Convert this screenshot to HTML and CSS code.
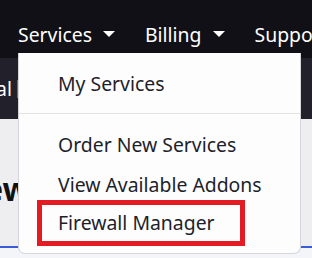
FILE: index.html
```html
<!DOCTYPE html>
<html>
<head>
<meta charset="utf-8">
<link rel="stylesheet" href="styles.css">
</head>
<body>
<div class="page">
  <nav class="topnav">
    <div class="nav-item">Services <span class="caret"></span></div>
    <div class="nav-item">Billing <span class="caret"></span></div>
    <div class="nav-item">Support</div>
  </nav>
  <div class="subbar"><span class="sub-text">al</span><span class="sub-mark"></span></div>
  <div class="content">
    <h1 class="heading">ew</h1>
    <div class="rule"></div>
  </div>
  <div class="dropdown">
    <div class="dd-item">My Services</div>
    <div class="dd-divider"></div>
    <div class="dd-item">Order New Services</div>
    <div class="dd-item">View Available Addons</div>
    <div class="dd-item dd-highlight">Firewall Manager</div>
  </div>
</div>
</body>
</html>
```

FILE: styles.css
```css
html, body {
  margin: 0;
  padding: 0;
}
body {
  width: 312px;
  height: 258px;
  overflow: hidden;
  font-family: "Noto Sans", "Liberation Sans", sans-serif;
  background: #f4f5f8;
}
.page {
  position: relative;
  width: 312px;
  height: 258px;
  overflow: hidden;
}
.topnav {
  height: 58px;
  background: #111016;
  display: flex;
  align-items: center;
  gap: 30px;
  padding-left: 18px;
  padding-top: 10px;
  box-sizing: border-box;
  white-space: nowrap;
}
.nav-item {
  color: #ffffff;
  font-size: 19.4px;
  display: flex;
  align-items: center;
  gap: 11px;
}
.caret {
  width: 0;
  height: 0;
  border-left: 6px solid transparent;
  border-right: 6px solid transparent;
  border-top: 6px solid #ffffff;
}
.subbar {
  height: 61px;
  background: #22202a;
  display: flex;
  align-items: center;
  color: #fff;
  font-size: 19.4px;
  margin-left: -4px;
}
.sub-mark {
  width: 3px;
  height: 18px;
  background: #4a6fd8;
  margin-left: 5px;
}
.content {
  height: 129px;
  background: #eeeef1;
  display: flex;
  flex-direction: column;
  justify-content: space-between;
}
.heading {
  margin: 50px 0 0 -16px;
  font-size: 32px;
  font-weight: 700;
  color: #111;
  line-height: 40px;
}
.rule {
  height: 2px;
  background: #3b5bdb;
}
.dropdown {
  position: absolute;
  left: 18px;
  top: 53px;
  width: 283px;
  height: 201px;
  box-sizing: border-box;
  background: #fdfdfe;
  border: 1px solid #d6d6da;
  border-top: none;
  border-radius: 0 0 7px 7px;
  padding: 11px 0 0 0;
  color: #1e1f2b;
}
.dd-item {
  font-size: 19.4px;
  line-height: 40px;
  padding-left: 40px;
  margin-left: -1px;
}
.dd-divider {
  height: 1px;
  background: #e3e3e6;
  margin: 9px 0 11px 0;
}
.dd-highlight {
  margin-top: -5px;
  margin-left: 18px;
  margin-right: 55px;
  padding-left: 16px;
  border: 5px solid #e31b23;
  line-height: 36px;
}
```
